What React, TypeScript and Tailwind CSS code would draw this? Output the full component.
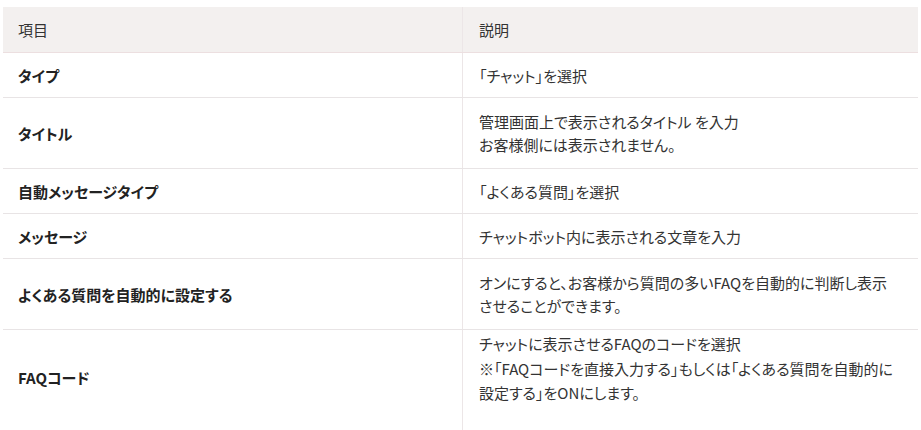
const rows = [
  { name: "タイプ", desc: ["「チャット」を選択"], h: "h-[45px]" },
  {
    name: "タイトル",
    desc: ["管理画面上で表示されるタイトル を入力", "お客様側には表示されません。"],
    h: "h-[71px]",
  },
  { name: "自動メッセージタイプ", desc: ["「よくある質問」を選択"], h: "h-[45px]" },
  { name: "メッセージ", desc: ["チャットボット内に表示される文章を入力"], h: "h-[45px]" },
  {
    name: "よくある質問を自動的に設定する",
    desc: ["オンにすると、お客様から質問の多いFAQを自動的に判断し表示", "させることができます。"],
    h: "h-[71px]",
  },
];

export default function App() {
  return (
    <div className="w-[921px] h-[430px] overflow-hidden bg-white pt-[7px] pl-[3px] font-['Noto_Sans_CJK_JP',sans-serif] text-[15px] leading-[23px] text-[#333] [font-feature-settings:'palt']">
      <div className="w-[915px]">
        {/* header */}
        <div className="flex h-[46px] bg-[#f3f0ef] border-b border-[#ecdfe0]">
          <div className="w-[460px] flex items-center pl-[15px] border-r border-[#ece6e7]">項目</div>
          <div className="flex-1 flex items-center pl-[16px]">説明</div>
        </div>

        {rows.map((r) => (
          <div key={r.name} className={`flex ${r.h} border-b border-[#e8e4e5]`}>
            <div className="w-[460px] flex items-center pl-[15px] border-r border-[#ece6e7] font-bold text-[#222]">
              {r.name}
            </div>
            <div className="flex-1 flex flex-col justify-center pl-[16px]">
              {r.desc.map((d) => (
                <div key={d}>{d}</div>
              ))}
            </div>
          </div>
        ))}

        {/* last row */}
        <div className="flex h-[100px]">
          <div className="w-[460px] flex items-center pl-[15px] pb-[6px] border-r border-[#ece6e7] font-bold text-[#222]">
            FAQコード
          </div>
          <div className="flex-1 pl-[16px] pt-[2px] leading-[24.5px]">
            <div>チャットに表示させるFAQのコードを選択</div>
            <div>※「FAQコードを直接入力する」もしくは「よくある質問を自動的に</div>
            <div>設定する」をONにします。</div>
          </div>
        </div>
      </div>
    </div>
  );
}
